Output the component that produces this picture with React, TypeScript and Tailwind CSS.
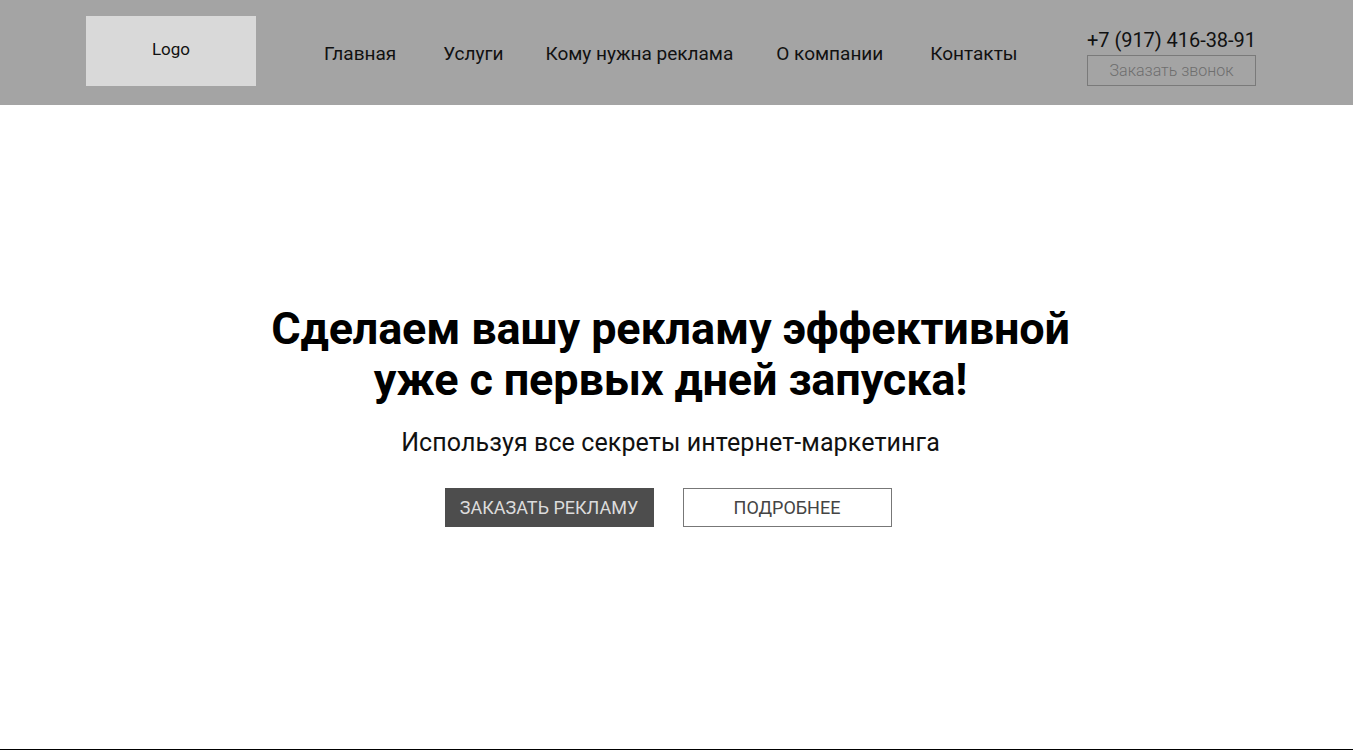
const NAV = [
  { label: "Главная", ml: "ml-[68px]" },
  { label: "Услуги", ml: "ml-[47px]" },
  { label: "Кому нужна реклама", ml: "ml-[42px]" },
  { label: "О компании", ml: "ml-[43px]" },
  { label: "Контакты", ml: "ml-[47px]" },
];

export default function App() {
  return (
    <div className="min-h-screen bg-white font-['Roboto','Noto_Sans',sans-serif] text-black">
      {/* Header */}
      <header className="h-[105px] bg-[#a4a4a4]">
        <div className="flex h-full w-[1170px] items-start pl-[86px] pt-[16px] box-content">
          <div className="flex h-[70px] w-[170px] items-center justify-center bg-[#d9d9d9] pb-[2px] text-[17px] text-[#111]">
            Logo
          </div>
          <nav className="flex h-[70px] items-center pt-[6px]">
            {NAV.map(({ label, ml }) => (
              <a key={label} className={`${ml} text-[19px] text-[#111] whitespace-nowrap`}>
                {label}
              </a>
            ))}
          </nav>
          <div className="ml-auto flex w-[169px] flex-col pt-[12px]">
            <p className="text-[20px] leading-[24px] tracking-[-0.05px] text-[#111] whitespace-nowrap">+7 (917) 416-38-91</p>
            <button className="mt-[3px] h-[31px] w-[169px] border border-[#7a7a7a] text-[16px] font-light text-[#6e6e6e]">
              Заказать звонок
            </button>
          </div>
        </div>
      </header>

      {/* Hero */}
      <section className="flex h-[644px] w-[1336px] flex-col items-center pt-[198px]">
        <h1 className="ml-[5px] text-center text-[45px] font-bold leading-[51px] tracking-[-0.15px]">
          Сделаем вашу рекламу эффективной
          <br />
          уже с первых дней запуска!
        </h1>
        <p className="ml-[5px] mt-[22px] text-[25px] leading-[32px] tracking-[0.1px] text-[#111]">Используя все секреты интернет-маркетинга</p>
        <div className="mt-[29px] flex gap-[29px]">
          <button className="h-[39px] w-[209px] bg-[#4d4d4d] text-[18px] text-[#dcdcdc]">ЗАКАЗАТЬ РЕКЛАМУ</button>
          <button className="h-[39px] w-[209px] border border-[#777] bg-white text-[18px] text-[#444]">ПОДРОБНЕЕ</button>
        </div>
      </section>
      <div className="h-px bg-black" />
    </div>
  );
}
